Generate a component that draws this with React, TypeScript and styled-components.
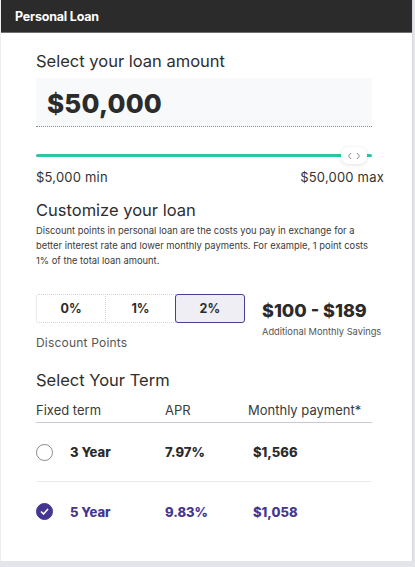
import React, { useState } from 'react';
import styled, { createGlobalStyle } from 'styled-components';

const GlobalStyle = createGlobalStyle`
  * { box-sizing: border-box; }
  body {
    margin: 0;
    background: #e3e5ea;
    font-family: Inter, "Liberation Sans", sans-serif;
    color: #2b2b2b;
  }
`;

const Page = styled.div`
  width: 415px;
  height: 567px;
  overflow: hidden;
`;

const Card = styled.div`
  width: 413px;
  height: 561px;
  background: #fff;
  border-right: 1px solid #d8d8dc;
  border-left: 1px solid #eeeeee;
`;

const Header = styled.div`
  height: 33px;
  background: #2b2b2b;
  border-bottom: 1px solid #6e6e6e;
  color: #fff;
  font-weight: 700;
  font-size: 12.5px;
  letter-spacing: -0.2px;
  display: flex;
  align-items: center;
  padding-left: 14px;
`;

const Body = styled.div`
  padding: 0 40px 0 35px;
`;

const Title = styled.h2<{ mt: number }>`
  margin: ${({ mt }) => mt}px 0 0;
  font-size: 16.5px;
  font-weight: 400;
  color: #2e2e2e;
  line-height: 22px;
`;

const AmountBox = styled.div`
  margin-top: 6px;
  height: 49px;
  background: #f8f9fb;
  border-bottom: 1px dotted #8a8a8a;
  display: flex;
  align-items: center;
  padding-left: 11px;
  padding-top: 3px;
  font-size: 26px;
  font-weight: 800;
  color: #2b2b2b;
  letter-spacing: 0.2px;
`;

const Slider = styled.div`
  position: relative;
  margin-top: 27px;
  height: 3px;
  background: #2ec5a2;
  border-radius: 2px;
`;

const Thumb = styled.div`
  position: absolute;
  right: 5px;
  top: -7px;
  width: 26px;
  height: 17px;
  display: flex;
  align-items: center;
  justify-content: center;
  background: #fff;
  border-radius: 8px;
  box-shadow: 0 1px 4px rgba(0, 0, 0, 0.12);
`;

const Range = styled.div`
  display: flex;
  justify-content: space-between;
  margin-top: 12px;
  margin-right: -12px;
  font-size: 13px;
  color: #333;
  letter-spacing: 0.2px;
`;

const Desc = styled.p`
  margin: 2px 0 0;
  font-size: 9.4px;
  line-height: 15px;
  color: #3a3a3a;
`;

const PointsRow = styled.div`
  margin-top: 26px;
  display: flex;
  align-items: flex-start;
  gap: 17px;
`;

const PointsCol = styled.div`
  flex-shrink: 0;
`;

const Segments = styled.div`
  display: flex;
  width: 209px;
`;

const Segment = styled.button<{ active: boolean }>`
  flex: 1;
  height: 29px;
  font-family: inherit;
  font-size: 12.5px;
  font-weight: 700;
  color: #2b2b2b;
  cursor: pointer;
  background: ${({ active }) => (active ? '#eeeef4' : '#fff')};
  border: ${({ active }) => (active ? '1.5px solid #4b3d91' : '1px dotted #d6d6de')};
  border-radius: ${({ active }) => (active ? '3px' : '0')};
  margin-left: -1px;
  &:first-child {
    margin-left: 0;
    border-radius: 3px 0 0 3px;
  }
`;

const PointsLabel = styled.div`
  margin-top: 12px;
  font-size: 12px;
  line-height: 15px;
  color: #555;
  letter-spacing: 0.2px;
`;

const Savings = styled.div`
  padding-top: 6px;
  white-space: nowrap;
`;

const SavingsValue = styled.div`
  font-size: 18px;
  font-weight: 800;
  color: #2b2b2b;
  line-height: 22px;
`;

const SavingsLabel = styled.div`
  font-size: 9.3px;
  color: #555;
  margin-top: 4px;
`;

const TableHead = styled.div`
  margin-top: 11px;
  display: grid;
  grid-template-columns: 129px 83px 1fr;
  font-size: 13px;
  line-height: 16px;
  color: #3a3a3a;
  padding-bottom: 4px;
  border-bottom: 1.5px solid #c9c7d6;
`;

const TermRow = styled.label<{ active: boolean; last?: boolean }>`
  display: grid;
  grid-template-columns: 34px 95px 88px 1fr;
  align-items: center;
  height: 59px;
  font-size: 13px;
  font-weight: 800;
  color: ${({ active }) => (active ? '#45368f' : '#2b2b2b')};
  border-bottom: ${({ last }) => (last ? 'none' : '1px solid #ebeaf1')};
  cursor: pointer;
`;

const Radio = styled.span<{ active: boolean }>`
  width: 17px;
  height: 17px;
  border-radius: 50%;
  border: 1px solid ${({ active }) => (active ? '#45368f' : '#8a8a8a')};
  background: ${({ active }) => (active ? '#45368f' : '#fff')};
  display: flex;
  align-items: center;
  justify-content: center;
`;

const terms = [
  { term: '3 Year', apr: '7.97%', pay: '$1,566' },
  { term: '5 Year', apr: '9.83%', pay: '$1,058' },
];

export default function App() {
  const [points, setPoints] = useState(2);
  const [term, setTerm] = useState(1);

  return (
    <Page>
      <GlobalStyle />
      <Card>
        <Header>Personal Loan</Header>
        <Body>
          <Title mt={17}>Select your loan amount</Title>
          <AmountBox>$50,000</AmountBox>
          <Slider>
            <Thumb>
              <svg width="14" height="8" viewBox="0 0 14 8" fill="none" stroke="#8a8a8a" strokeWidth="1">
                <path d="M4 1 L1.5 4 L4 7" />
                <path d="M10 1 L12.5 4 L10 7" />
              </svg>
            </Thumb>
          </Slider>
          <Range>
            <span>$5,000 min</span>
            <span>$50,000 max</span>
          </Range>
          <Title mt={14}>Customize your loan</Title>
          <Desc>
            Discount points in personal loan are the costs you pay in exchange for a better interest rate and lower
            monthly payments. For example, 1 point costs 1% of the total loan amount.
          </Desc>
          <PointsRow>
            <PointsCol>
              <Segments>
                {[0, 1, 2].map((p) => (
                  <Segment key={p} active={points === p} onClick={() => setPoints(p)}>
                    {p}%
                  </Segment>
                ))}
              </Segments>
              <PointsLabel>Discount Points</PointsLabel>
            </PointsCol>
            <Savings>
              <SavingsValue>$100 - $189</SavingsValue>
              <SavingsLabel>Additional Monthly Savings</SavingsLabel>
            </Savings>
          </PointsRow>
          <Title mt={19}>Select Your Term</Title>
          <TableHead>
            <span>Fixed term</span>
            <span>APR</span>
            <span>Monthly payment*</span>
          </TableHead>
          {terms.map((t, i) => (
            <TermRow key={t.term} active={term === i} last={i === terms.length - 1} onClick={() => setTerm(i)}>
              <Radio active={term === i}>
                {term === i && (
                  <svg width="9" height="7" viewBox="0 0 9 7" fill="none" stroke="#fff" strokeWidth="1.6">
                    <path d="M1 3.5 L3.5 6 L8 1" />
                  </svg>
                )}
              </Radio>
              <span>{t.term}</span>
              <span>{t.apr}</span>
              <span>{t.pay}</span>
            </TermRow>
          ))}
        </Body>
      </Card>
    </Page>
  );
}
